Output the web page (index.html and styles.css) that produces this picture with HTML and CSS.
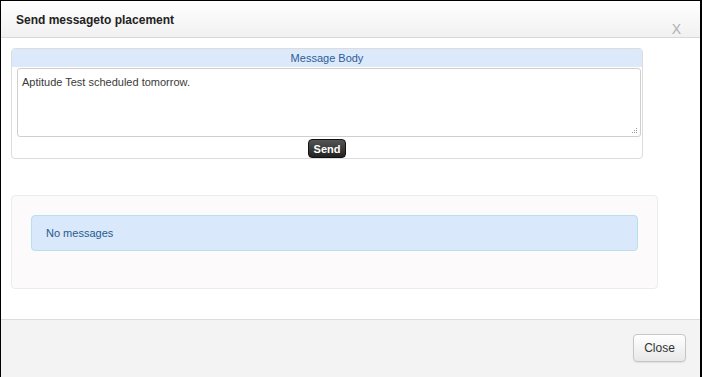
FILE: index.html
```html
<!DOCTYPE html>
<html lang="en">
<head>
    <meta charset="UTF-8">
    <title>Send message to placement</title>
    <link rel="stylesheet" href="styles.css">
</head>
<body>
    <div class="modal">
        <div class="modal-header">
            <h3>Send messageto placement</h3>
            <span class="close-x">X</span>
        </div>

        <div class="modal-body">
            <!-- compose -->
            <div class="compose">
                <div class="compose-title">Message Body</div>
                <div class="compose-field">
                    <div class="textarea">
                        Aptitude Test scheduled tomorrow.
                        <svg class="grip" width="6" height="6" viewBox="0 0 6 6">
                            <rect x="4" y="0" width="1" height="1" fill="#999"/>
                            <rect x="2" y="2" width="1" height="1" fill="#999"/>
                            <rect x="4" y="2" width="1" height="1" fill="#999"/>
                            <rect x="0" y="4" width="1" height="1" fill="#999"/>
                            <rect x="2" y="4" width="1" height="1" fill="#999"/>
                            <rect x="4" y="4" width="1" height="1" fill="#999"/>
                        </svg>
                    </div>
                </div>
                <div class="compose-actions">
                    <button class="btn-send">Send</button>
                </div>
            </div>

            <!-- message list -->
            <div class="messages">
                <div class="alert-info">No messages</div>
            </div>
        </div>

        <div class="modal-footer">
            <button class="btn-close">Close</button>
        </div>
    </div>
</body>
</html>
```

FILE: styles.css
```css
* {
    box-sizing: border-box;
    margin: 0;
    padding: 0;
}

body {
    font-family: 'Liberation Sans', Arial, sans-serif;
    background: #000;
    width: 702px;
    height: 377px;
    overflow: hidden;
}

.modal {
    background: #fff;
    margin: 1px 2px 0 1px;
    height: 376px;
    display: flex;
    flex-direction: column;
}

.modal-header {
    height: 37px;
    background: linear-gradient(#fff, #f1f1f1);
    border-bottom: 1px solid #d8d8d8;
    display: flex;
    align-items: flex-start;
    justify-content: space-between;
    padding: 11px 19px 0 15px;
}

.modal-header h3 {
    font-size: 12px;
    font-weight: bold;
    color: #222;
    line-height: 16px;
}

.close-x {
    font-size: 14px;
    color: #b0b0b0;
    margin-top: 9px;
}

.modal-body {
    flex: 1;
    padding: 10px 0 0 10px;
}

.compose {
    width: 632px;
    height: 111px;
    border: 1px solid #dcdcdc;
    border-radius: 4px;
}

.compose-title {
    height: 18px;
    background: #dce9fb;
    border-radius: 3px 3px 0 0;
    text-align: center;
    font-size: 11px;
    line-height: 18px;
    color: #2d5c98;
}

.compose-field {
    padding: 1px 0 0 5px;
}

.textarea {
    position: relative;
    width: 624px;
    height: 69px;
    border: 1px solid #cfcfcf;
    border-radius: 3px;
    padding: 7px 4px;
    font-size: 11px;
    color: #3a3a3a;
}

.grip {
    position: absolute;
    right: 2px;
    bottom: 2px;
}

.compose-actions {
    display: flex;
    justify-content: center;
    padding-top: 2px;
}

.btn-send {
    height: 19px;
    width: 38px;
    border: 1px solid #111;
    border-radius: 4px;
    background: linear-gradient(#555, #222);
    color: #fff;
    font-family: 'Liberation Sans', Arial, sans-serif;
    font-size: 11px;
    font-weight: bold;
}

.messages {
    width: 647px;
    height: 94px;
    margin-top: 36px;
    background: #fcfafb;
    border: 1px solid #ececec;
    border-radius: 4px;
    padding: 19px 19px 0 19px;
}

.alert-info {
    height: 36px;
    background: #d9e8fb;
    border: 1px solid #b7e0ea;
    border-radius: 4px;
    padding: 0 14px;
    font-size: 11px;
    line-height: 34px;
    color: #275b8e;
}

.modal-footer {
    height: 58px;
    background: #f3f3f3;
    border-top: 1px solid #dcdcdc;
    display: flex;
    justify-content: flex-end;
    padding: 14px 14px 0 0;
}

.btn-close {
    height: 28px;
    width: 53px;
    border: 1px solid #c6c6c6;
    border-radius: 4px;
    background: linear-gradient(#fff, #e8e8e8);
    box-shadow: 0 1px 1px rgba(0, 0, 0, 0.08);
    color: #333;
    font-family: 'Liberation Sans', Arial, sans-serif;
    font-size: 12px;
}
```
